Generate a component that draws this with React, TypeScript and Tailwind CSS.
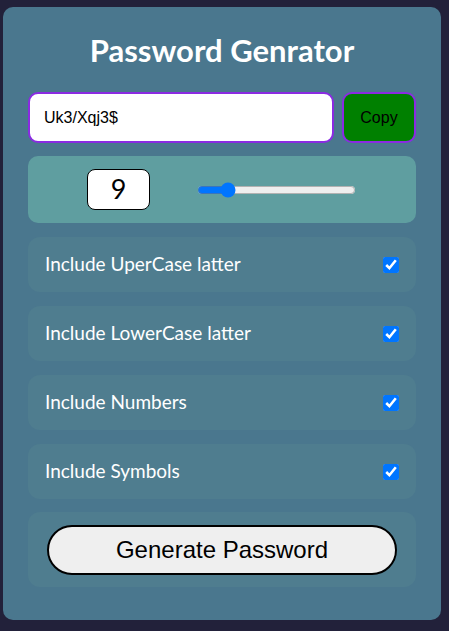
import { useState } from "react";

const options = [
  "Include UperCase latter",
  "Include LowerCase latter",
  "Include Numbers",
  "Include Symbols",
];

export default function App() {
  const [length, setLength] = useState(9);

  return (
    <div className="min-h-[631px] bg-[#22213a] pt-[7px] pl-[3px] pr-[8px]">
      <div className="w-[438px] h-[613px] rounded-[10px] bg-[#4a778e] px-[25px] pt-[25px] font-['Lato',sans-serif]">
        <h1 className="text-center text-[31px] font-bold leading-[36px] text-white">
          Password Genrator
        </h1>

        <div className="mt-[24px] flex gap-[8px]">
          <input
            readOnly
            value="Uk3/Xqj3$"
            className="h-[51px] w-[306px] rounded-[10px] border-2 border-[#8a2be2] bg-white px-[14px] font-['Liberation_Sans',sans-serif] text-[16px] text-black outline-none"
          />
          <button className="h-[51px] w-[74px] rounded-[10px] border-2 border-[#8a2be2] bg-[#008000] font-['Liberation_Sans',sans-serif] text-[16px] text-black">
            Copy
          </button>
        </div>

        <div className="mt-[13px] flex h-[67px] items-center rounded-[10px] bg-[#5f9ea0] pl-[59px]">
          <div className="flex h-[41px] w-[63px] items-center justify-center rounded-[8px] border border-black bg-white text-[27px] text-black">
            {length}
          </div>
          <input
            type="range"
            min={5}
            max={30}
            value={length}
            onChange={(e) => setLength(Number(e.target.value))}
            className="ml-[47px] w-[159px] accent-[#0075ff]"
          />
        </div>

        <div className="mt-[14px] flex flex-col gap-[14px]">
          {options.map((label) => (
            <div
              key={label}
              className="flex h-[55px] items-center justify-between rounded-[12px] bg-[#4f7d8f] pl-[17px] pr-[17px]"
            >
              <span className="text-[19px] text-white">{label}</span>
              <input type="checkbox" defaultChecked className="h-[16px] w-[16px] accent-[#0075ff]" />
            </div>
          ))}
        </div>

        <div className="mt-[13px] flex h-[75px] items-center rounded-[12px] bg-[#4f7d8f] px-[19px]">
          <button className="h-[50px] w-full rounded-[25px] border-2 border-black bg-[#efefef] font-['Liberation_Sans',sans-serif] text-[24px] text-black">
            Generate Password
          </button>
        </div>
      </div>
    </div>
  );
}
